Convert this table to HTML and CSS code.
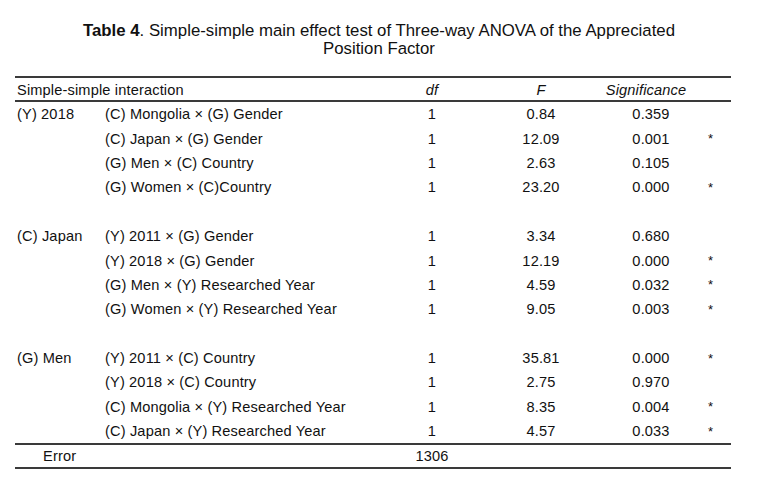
FILE: index.html
```html
<!DOCTYPE html>
<html>
<head>
<meta charset="utf-8">
<link rel="stylesheet" href="styles.css">
</head>
<body>
<div class="page">
  <div class="caption"><b>Table 4</b>. Simple-simple main effect test of Three-way ANOVA of the Appreciated<br>Position Factor</div>
  <table class="tbl">
    <colgroup>
      <col class="c1"><col class="c2"><col class="c3"><col class="c4"><col class="c5"><col class="c6">
    </colgroup>
    <thead>
      <tr><th class="left" colspan="2">Simple-simple interaction</th><th><i>df</i></th><th><i>F</i></th><th><i class="ov">Significance</i></th><th></th></tr>
    </thead>
    <tbody>
      <tr><td>(Y) 2018</td><td>(C) Mongolia × (G) Gender</td><td class="n">1</td><td class="n">0.84</td><td class="n">0.359</td><td class="s"></td></tr>
      <tr><td></td><td>(C) Japan × (G) Gender</td><td class="n">1</td><td class="n">12.09</td><td class="n">0.001</td><td class="s">*</td></tr>
      <tr><td></td><td>(G) Men × (C) Country</td><td class="n">1</td><td class="n">2.63</td><td class="n">0.105</td><td class="s"></td></tr>
      <tr><td></td><td>(G) Women × (C)Country</td><td class="n">1</td><td class="n">23.20</td><td class="n">0.000</td><td class="s">*</td></tr>
      <tr><td colspan="6">&nbsp;</td></tr>
      <tr><td>(C) Japan</td><td>(Y) 2011 × (G) Gender</td><td class="n">1</td><td class="n">3.34</td><td class="n">0.680</td><td class="s"></td></tr>
      <tr><td></td><td>(Y) 2018 × (G) Gender</td><td class="n">1</td><td class="n">12.19</td><td class="n">0.000</td><td class="s">*</td></tr>
      <tr><td></td><td>(G) Men × (Y) Researched Year</td><td class="n">1</td><td class="n">4.59</td><td class="n">0.032</td><td class="s">*</td></tr>
      <tr><td></td><td>(G) Women × (Y) Researched Year</td><td class="n">1</td><td class="n">9.05</td><td class="n">0.003</td><td class="s">*</td></tr>
      <tr><td colspan="6">&nbsp;</td></tr>
      <tr><td>(G) Men</td><td>(Y) 2011 × (C) Country</td><td class="n">1</td><td class="n">35.81</td><td class="n">0.000</td><td class="s">*</td></tr>
      <tr><td></td><td>(Y) 2018 × (C) Country</td><td class="n">1</td><td class="n">2.75</td><td class="n">0.970</td><td class="s"></td></tr>
      <tr><td></td><td>(C) Mongolia × (Y) Researched Year</td><td class="n">1</td><td class="n">8.35</td><td class="n">0.004</td><td class="s">*</td></tr>
      <tr><td></td><td>(C) Japan × (Y) Researched Year</td><td class="n">1</td><td class="n">4.57</td><td class="n">0.033</td><td class="s">*</td></tr>
    </tbody>
    <tfoot>
      <tr><td class="err">Error</td><td></td><td class="n">1306</td><td></td><td></td><td></td></tr>
    </tfoot>
  </table>
</div>
</body>
</html>
```

FILE: styles.css
```css
html, body {
  margin: 0;
  padding: 0;
  background: #fff;
}
body {
  font-family: "Liberation Sans", Arial, Helvetica, sans-serif;
  color: #111;
}
.page {
  width: 716px;
  padding: 22px 0 0 15px;
}
.caption {
  font-size: 16.8px;
  line-height: 18px;
  text-align: center;
  padding-left: 12px;
  margin-bottom: 18px;
  white-space: nowrap;
}
.caption b {
  font-weight: bold;
}
.tbl {
  width: 716px;
  border-collapse: collapse;
  table-layout: fixed;
  font-size: 14.6px;
  letter-spacing: 0.15px;
  border-top: 2px solid #3a3a3a;
  border-bottom: 2px solid #3a3a3a;
}
.c1 { width: 90px; }
.c2 { width: 297px; }
.c3 { width: 60px; }
.c4 { width: 158px; }
.c5 { width: 62px; }
.c6 { width: 49px; }
.tbl th {
  font-weight: normal;
  height: 20px;
  padding: 2px 0 0 0;
  text-align: center;
  white-space: nowrap;
  border-bottom: 2px solid #3a3a3a;
}
.tbl th.left {
  text-align: left;
  padding-left: 2px;
}
.tbl th .ov {
  display: block;
  margin: 0 -30px 0 -40px;
  text-align: center;
}
.tbl td {
  height: 24.4px;
  padding: 0;
  white-space: nowrap;
}
.tbl tbody td:first-child {
  padding-left: 2px;
}
.tbl td.n {
  text-align: center;
}
.tbl td.s {
  padding-left: 26px;
  font-size: 13px;
}
.tbl tfoot td {
  border-top: 2px solid #3a3a3a;
  height: 22px;
}
.tbl td.err {
  padding-left: 28px;
}
```
